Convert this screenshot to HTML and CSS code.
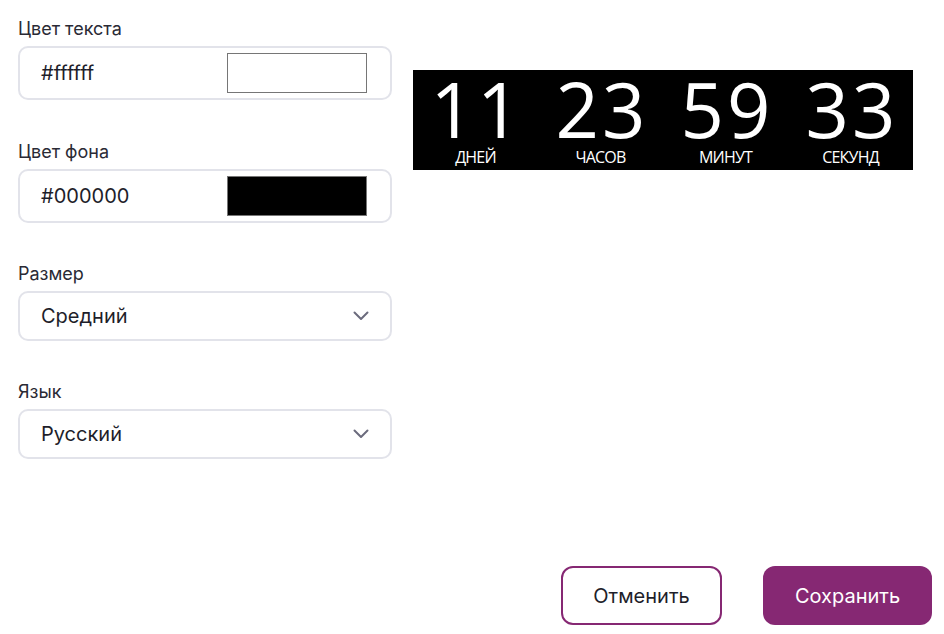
FILE: index.html
```html
<!DOCTYPE html>
<html lang="ru">
<head>
    <meta charset="UTF-8">
    <meta name="viewport" content="width=device-width, initial-scale=1.0">
    <title>Настройки таймера</title>
    <link rel="stylesheet" href="styles.css">
</head>
<body>
    <div class="page">
        <div class="main">
            <form class="settings">
                <!-- Цвет текста -->
                <div class="field">
                    <label class="label">Цвет текста</label>
                    <div class="control color-control">
                        <span class="value">#ffffff</span>
                        <span class="swatch swatch-white"></span>
                    </div>
                </div>
                <!-- Цвет фона -->
                <div class="field">
                    <label class="label">Цвет фона</label>
                    <div class="control color-control">
                        <span class="value">#000000</span>
                        <span class="swatch swatch-black"></span>
                    </div>
                </div>
                <!-- Размер -->
                <div class="field">
                    <label class="label">Размер</label>
                    <div class="control select-control">
                        <span class="value">Средний</span>
                        <svg class="chevron" width="16" height="10" viewBox="0 0 16 10"><path d="M1.5 1.5 8 8l6.5-6.5" fill="none" stroke="#6b6b7d" stroke-width="2" stroke-linecap="round" stroke-linejoin="round"/></svg>
                    </div>
                </div>
                <!-- Язык -->
                <div class="field">
                    <label class="label">Язык</label>
                    <div class="control select-control">
                        <span class="value">Русский</span>
                        <svg class="chevron" width="16" height="10" viewBox="0 0 16 10"><path d="M1.5 1.5 8 8l6.5-6.5" fill="none" stroke="#6b6b7d" stroke-width="2" stroke-linecap="round" stroke-linejoin="round"/></svg>
                    </div>
                </div>
            </form>
            <div class="preview">
                <div class="timer">
                    <div class="unit"><span class="num">11</span><span class="cap">ДНЕЙ</span></div>
                    <div class="unit"><span class="num">23</span><span class="cap">ЧАСОВ</span></div>
                    <div class="unit"><span class="num">59</span><span class="cap">МИНУТ</span></div>
                    <div class="unit"><span class="num">33</span><span class="cap">СЕКУНД</span></div>
                </div>
            </div>
        </div>
        <div class="actions">
            <button type="button" class="btn btn-outline">Отменить</button>
            <button type="button" class="btn btn-primary">Сохранить</button>
        </div>
    </div>
</body>
</html>
```

FILE: styles.css
```css
* {
    box-sizing: border-box;
}
body {
    margin: 0;
    font-family: Inter, "Noto Sans", sans-serif;
    color: #1e1e2a;
    background-color: #ffffff;
}
.page {
    height: 634px;
    padding: 19px 12px 9px 18px;
    display: flex;
    flex-direction: column;
}
.main {
    display: flex;
    align-items: flex-start;
    flex: 1;
}
.settings {
    width: 374px;
    display: flex;
    flex-direction: column;
    gap: 42px;
}
.field {
    display: flex;
    flex-direction: column;
}
.field:nth-child(3),
.field:nth-child(4) {
    margin-top: -1px;
}
.label {
    font-size: 18px;
    line-height: 20px;
    color: #2a2a35;
    margin-bottom: 7px;
}
.control {
    display: flex;
    align-items: center;
    border: 2px solid #e2e3ea;
    border-radius: 10px;
    padding: 0 22px 0 21px;
    font-size: 20px;
}
.color-control {
    height: 54px;
    padding-right: 23px;
}
.select-control {
    height: 50px;
}
.value {
    flex: 1;
}
.swatch {
    width: 140px;
    height: 40px;
    border: 1px solid #767676;
}
.swatch-white {
    background-color: #ffffff;
}
.swatch-black {
    background-color: #000000;
}
.chevron {
    margin-right: -1px;
}
.preview {
    margin-left: 21px;
    margin-top: 51px;
}
.timer {
    width: 500px;
    height: 100px;
    background-color: #000000;
    color: #ffffff;
    display: grid;
    grid-template-columns: repeat(4, 1fr);
    font-family: "Open Sans", "DejaVu Sans", sans-serif;
}
.unit {
    display: flex;
    flex-direction: column;
    align-items: center;
}
.num {
    font-size: 76px;
    line-height: 76px;
    margin-top: 1px;
    letter-spacing: 3px;
    padding-left: 3px;
}
.cap {
    font-size: 16px;
    line-height: 18px;
    letter-spacing: -0.8px;
    margin-top: 1px;
}
.actions {
    display: flex;
    justify-content: flex-end;
    gap: 41px;
}
.btn {
    height: 59px;
    border-radius: 12px;
    font-family: Inter, "Noto Sans", sans-serif;
    font-size: 20px;
    cursor: pointer;
}
.btn-outline {
    width: 161px;
    background-color: #ffffff;
    border: 2px solid #862873;
    color: #1e1e2a;
}
.btn-primary {
    width: 169px;
    background-color: #862873;
    border: none;
    color: #ffffff;
}
```
